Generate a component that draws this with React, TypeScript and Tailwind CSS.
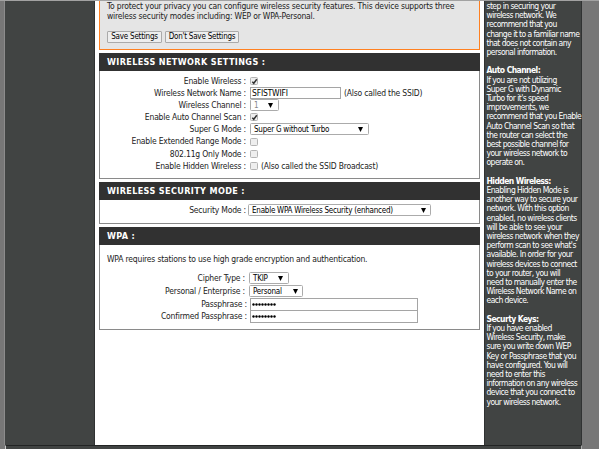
import type { ReactNode } from 'react';

function Panel({ title, className, children }: { title: string; className: string; children: ReactNode }) {
  return (
    <section className={`flex w-[381px] flex-col border border-[#8a8a8a] bg-white ${className}`}>
      <h2 className="-mx-px -mt-px h-[18px] shrink-0 bg-[#313131] pl-2 font-['DejaVu_Sans_Condensed','DejaVu_Sans',sans-serif] text-[9px] leading-[19px] font-bold tracking-[0.37px] text-white">
        {title}
      </h2>
      {children}
    </section>
  );
}

function Row({ label, labelClass = 'w-[146px]', className = 'h-3', children }: { label: string; labelClass?: string; className?: string; children: ReactNode }) {
  return (
    <div className={`flex items-center ${className}`}>
      <span className={`shrink-0 text-right ${labelClass}`}>{label} :</span>
      {children}
    </div>
  );
}

function Check({ checked = false }: { checked?: boolean }) {
  return (
    <span className="ml-1 flex size-2 shrink-0 items-center justify-center rounded-[1.5px] border border-[#b4b4b4] bg-[#eeeeee]">
      {checked && (
        <svg viewBox="0 0 8 8" className="size-[7px] shrink-0">
          <path d="M1.5 4.2 3.2 6 6.6 1.5" fill="none" stroke="#303030" strokeWidth="1.7" />
        </svg>
      )}
    </span>
  );
}

function Select({ value, className }: { value: string; className: string }) {
  return (
    <span className={`flex shrink-0 items-center justify-between rounded-[1.5px] border border-[#ababab] bg-white pl-[3px] text-[8px] leading-none tracking-[-0.24px] ${className}`}>
      <span className="pt-[1.5px]">{value}</span>
      <svg viewBox="0 0 5 5" className="size-[5px]">
        <path d="M0 0h5L2.5 5z" fill="#000" />
      </svg>
    </span>
  );
}

function Password() {
  return (
    <span className="ml-[3px] flex h-[13px] w-[168px] items-center border border-[#a5a5a5] pl-px">
      <svg viewBox="0 0 24 3" className="h-[3px] w-6">
        {Array.from({ length: 8 }, (_, i) => (
          <circle key={i} cx={i * 3 + 1.5} cy="1.5" r="1.2" fill="#000" />
        ))}
      </svg>
    </span>
  );
}

function Help({ title, lines }: { title?: string; lines: string[] }) {
  return (
    <div className="mb-[9.2px]">
      {title && <b className="block">{title}</b>}
      {lines.map((line) => (
        <div key={line}>{line}</div>
      ))}
    </div>
  );
}

export default function App() {
  return (
    <div className="h-[449px] w-[599px] overflow-hidden border-t border-[#a2a2a2] bg-[#777777] font-['DejaVu_Sans_Condensed','DejaVu_Sans',sans-serif] text-[8.5px] tracking-[-0.19px] text-[#222]">
      <div className="flex h-[444px]">
        <div className="w-[5px] shrink-0 border-r border-[#8c8c8c]" />
        <div className="w-[90px] shrink-0 border-r border-[#303232] bg-[#414443]" />
        <main className="flex w-[389px] shrink-0 flex-col bg-white pl-1 whitespace-nowrap">
          <section className="h-[49px] w-[381px] bg-[#ff8020] px-px pb-px leading-[10px]">
            <div className="h-12 bg-[#e5e5e5] pl-[7px]">
              <p>To protect your privacy you can configure wireless security features. This device supports three</p>
              <p>wireless security modes including: WEP or WPA-Personal.</p>
              <div className="flex gap-[3px] pt-[10px] text-[8px] tracking-[-0.23px]">
                <button className="h-3 w-[55px] rounded-[1px] border border-[#aaa] bg-[#eeeeee] leading-none text-black">Save Settings</button>
                <button className="h-3 w-[74px] rounded-[1px] border border-[#aaa] bg-[#eeeeee] leading-none text-black">Don't Save Settings</button>
              </div>
            </div>
          </section>

          <Panel title="WIRELESS NETWORK SETTINGS :" className="mt-[3px] h-[126px]">
            <div className="pt-1">
              <Row label="Enable Wireless"><Check checked /></Row>
              <Row label="Wireless Network Name">
                <span className="ml-1 flex h-3 w-[91px] items-center border border-[#a5a5a5] pl-px text-black">SFISTWIFI</span>
                <span className="ml-[3px]">(Also called the SSID)</span>
              </Row>
              <Row label="Wireless Channel"><Select value="1" className="ml-1 h-3 w-[29px] pr-[5px] text-[#888]" /></Row>
              <Row label="Enable Auto Channel Scan"><Check checked /></Row>
              <Row label="Super G Mode"><Select value="Super G without Turbo" className="ml-1 h-3 w-[119px] pr-[5px] text-black" /></Row>
              <Row label="Enable Extended Range Mode" className="h-[13px]"><Check /></Row>
              <Row label="802.11g Only Mode"><Check /></Row>
              <Row label="Enable Hidden Wireless"><Check /><span className="ml-[3px]">(Also called the SSID Broadcast)</span></Row>
            </div>
          </Panel>

          <Panel title="WIRELESS SECURITY MODE :" className="mt-[3px] h-[42px]">
            <Row label="Security Mode" className="mt-1 h-3"><Select value="Enable WPA Wireless Security (enhanced)" className="ml-[2px] h-3 w-[183px] pr-[4px] text-black" /></Row>
          </Panel>

          <Panel title="WPA :" className="mt-[3px] h-[103px]">
            <p className="mt-[7.5px] mb-[7px] pl-[7px] leading-3">WPA requires stations to use high grade encryption and authentication.</p>
            <Row label="Cipher Type" labelClass="w-[145px]" className="h-[13px]"><Select value="TKIP" className="ml-1 h-3 w-10 pr-[5px] text-black" /></Row>
            <Row label="Personal / Enterprise" labelClass="w-[145px]" className="h-[13px]"><Select value="Personal" className="ml-1 h-3 w-[54px] pr-[4px] text-black" /></Row>
            <Row label="Passphrase" labelClass="w-[147px]" className="h-[13px]"><Password /></Row>
            <Row label="Confirmed Passphrase" labelClass="w-[147px]" className="-mt-px h-[13px]"><Password /></Row>
          </Panel>
        </main>
        <aside className="w-[98px] shrink-0 border-x border-[#303232] bg-[#414443] pt-[1px] pl-[1.5px] text-[8.5px] leading-[9.2px] tracking-[-0.56px] whitespace-nowrap text-white">
          <Help lines={['step in securing your', 'wireless network. We', 'recommend that you', 'change it to a familiar name', 'that does not contain any', 'personal information.']} />
          <Help title="Auto Channel:" lines={['If you are not utilizing', 'Super G with Dynamic', "Turbo for it's speed", 'improvements, we', 'recommend that you Enable', 'Auto Channel Scan so that', 'the router can select the', 'best possible channel for', 'your wireless network to', 'operate on.']} />
          <Help title="Hidden Wireless:" lines={['Enabling Hidden Mode is', 'another way to secure your', 'network. With this option', 'enabled, no wireless clients', 'will be able to see your', 'wireless network when they', "perform scan to see what's", 'available. In order for your', 'wireless devices to connect', 'to your router, you will', 'need to manually enter the', 'Wireless Network Name on', 'each device.']} />
          <Help title="Securty Keys:" lines={['If you have enabled', 'Wireless Security, make', 'sure you write down WEP', 'Key or Passphrase that you', 'have configured. You will', 'need to enter this', 'information on any wireless', 'device that you connect to', 'your wireless network.']} />
        </aside>
      </div>
      <footer className="ml-[5px] h-1 w-[577px] border-t border-r border-l border-t-[#222424] border-r-[#aaa] border-l-[#ccc] bg-[#414443]" />
    </div>
  );
}
